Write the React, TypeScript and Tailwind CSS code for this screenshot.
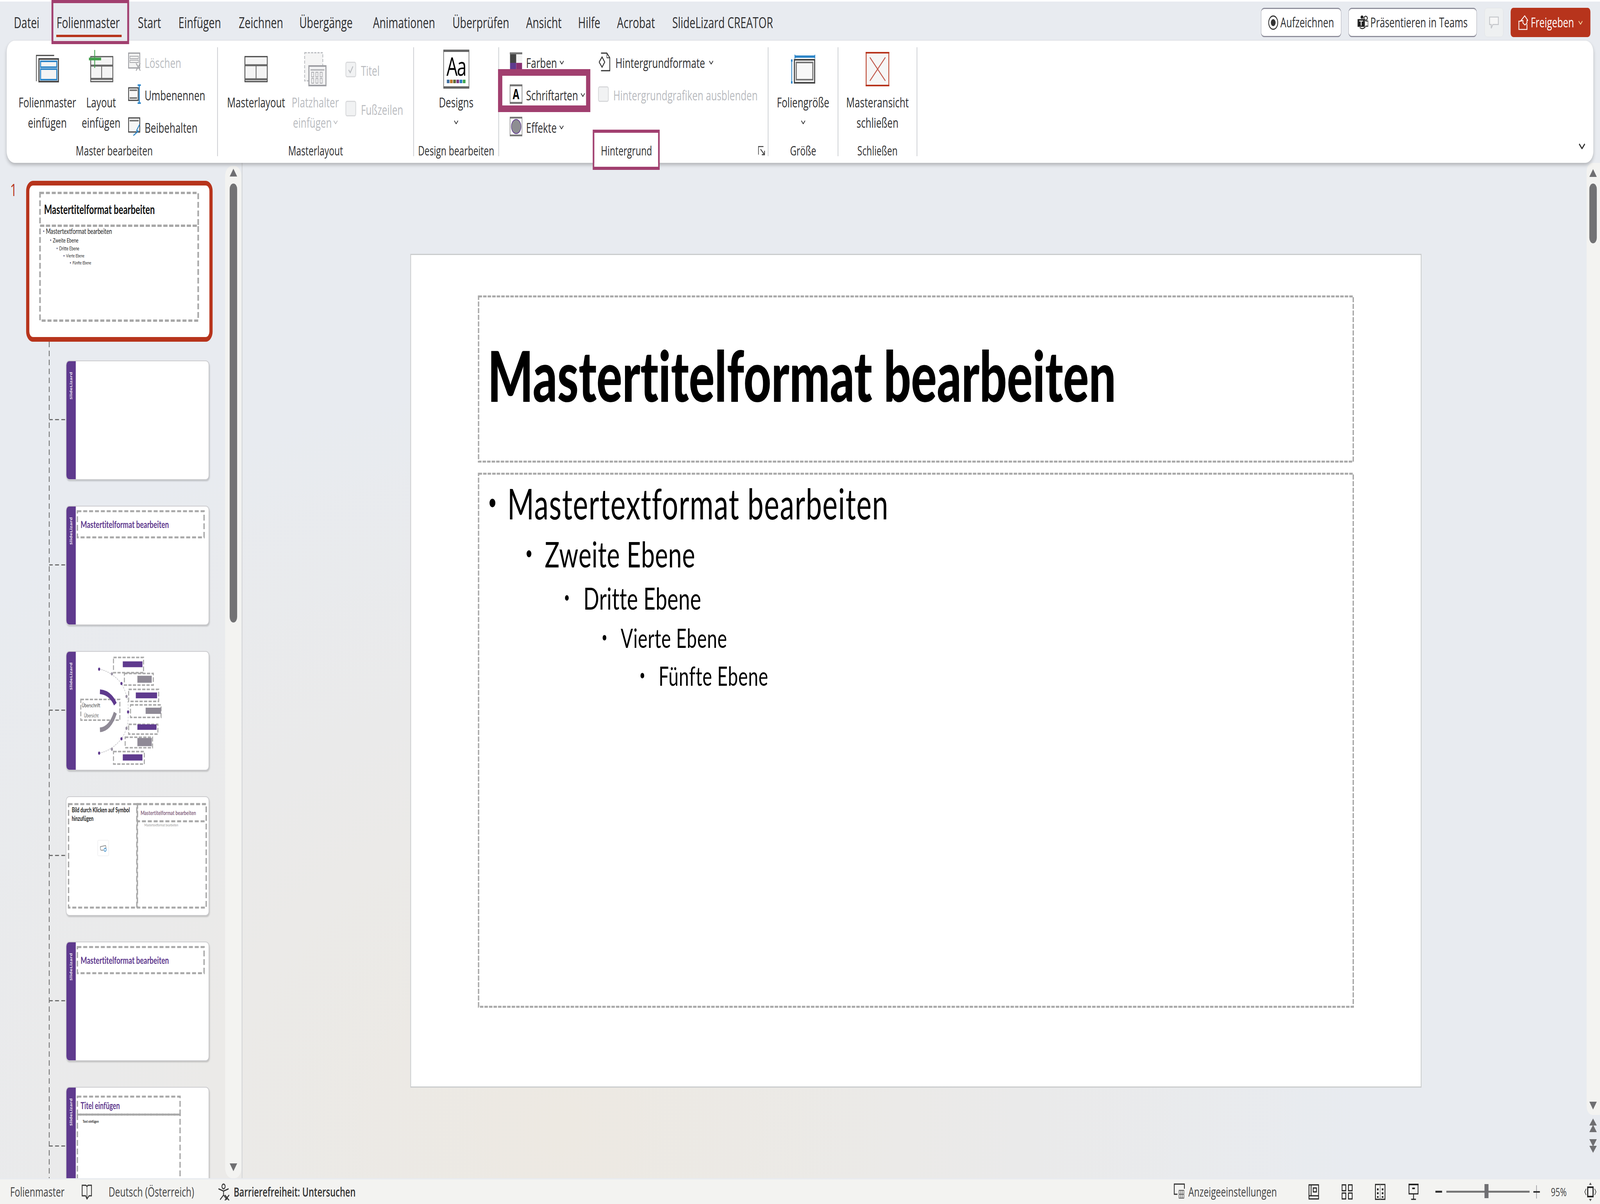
import React from "react";

/*
 * NOTE: the layout below uses the reference's 5998x3083 coordinates, but the sandbox
 * window measured 4096x3083 (window.innerWidth), not the 5998x3083 in the brief.
 * App scales the page to the real window at runtime: 1:1 at 5998 wide, squeezed
 * horizontally to about 68% at 4096 wide, so all content stays inside the frame.
 */

const BLUE = "#2e86c8";
const RED = "#b7341c";
const PURPLE = "#5f3a8e";

function Chev({ className = "" }: { className?: string }) {
  return (
    <svg width="16" height="10" viewBox="0 0 16 10" className={className}>
      <polyline points="1,1 8,9 15,1" fill="none" stroke="currentColor" strokeWidth="2.5" />
    </svg>
  );
}

function Dashed({
  className = "",
  sw = 5,
  dash = "13 4",
  color = "#a8a8a8",
  children,
}: {
  className?: string;
  sw?: number;
  dash?: string;
  color?: string;
  children?: React.ReactNode;
}) {
  return (
    <div className={"relative " + className}>
      <svg className="absolute inset-0 w-full h-full overflow-visible pointer-events-none">
        <rect x="0" y="0" width="100%" height="100%" fill="none" stroke={color} strokeWidth={sw} strokeDasharray={dash} />
      </svg>
      {children}
    </div>
  );
}

/* ---------- ribbon icons ---------- */
const IcoFolienmaster = () => (
  <svg width="86" height="71" viewBox="0 0 86 71">
    <path d="M1 68V2H68" fill="none" stroke="#444" strokeWidth="3" />
    <rect x="11" y="11" width="73" height="58" fill="#f4f4f4" stroke="#444" strokeWidth="4" />
    <rect x="17" y="17" width="61" height="15" fill="none" stroke={BLUE} strokeWidth="4" />
    <rect x="17" y="37" width="61" height="27" fill="none" stroke={BLUE} strokeWidth="4" />
  </svg>
);
const IcoLayout = () => (
  <svg width="92" height="83" viewBox="0 0 92 83">
    <rect x="7" y="17" width="83" height="64" fill="#f4f4f4" stroke="#555" strokeWidth="3" />
    <path d="M7 40H90M7 74H90" stroke="#666" strokeWidth="5" />
    <path d="M48 40V74" stroke="#666" strokeWidth="3" />
    <path d="M22 0V46" stroke="#3f9f4a" strokeWidth="3" />
    <path d="M0 23H46" stroke="#3f9f4a" strokeWidth="7" />
  </svg>
);
const IcoLoeschen = () => (
  <svg width="50" height="48" viewBox="0 0 50 48">
    <rect x="2" y="2" width="42" height="38" fill="#f3f3f3" stroke="#9a9ba0" strokeWidth="3" />
    <rect x="7" y="10" width="32" height="6" fill="none" stroke="#a6a7ab" strokeWidth="2" />
    <rect x="7" y="20" width="32" height="6" fill="none" stroke="#a6a7ab" strokeWidth="2" />
    <path d="M30 28L46 47M46 28L30 47" stroke="#a6a7ab" strokeWidth="3" />
  </svg>
);
const IcoUmbenennen = () => (
  <svg width="50" height="50" viewBox="0 0 50 50">
    <rect x="2" y="9" width="36" height="32" fill="#f6f6f6" stroke="#444" strokeWidth="3" />
    <path d="M6 15H34M6 35H34" stroke="#777" strokeWidth="4" />
    <path d="M36 2H48M36 48H48M42 2V48" stroke={BLUE} strokeWidth="4" />
  </svg>
);
const IcoBeibehalten = () => (
  <svg width="50" height="48" viewBox="0 0 50 48">
    <rect x="2" y="2" width="42" height="36" fill="#f6f6f6" stroke="#444" strokeWidth="3" />
    <path d="M6 9H40" stroke="#777" strokeWidth="4" />
    <path d="M44 18L32 34L38 36L20 47" fill="none" stroke={BLUE} strokeWidth="3" />
  </svg>
);
const IcoMasterlayout = () => (
  <svg width="88" height="68" viewBox="0 0 88 68">
    <rect x="2" y="2" width="84" height="64" fill="#f4f4f4" stroke="#444" strokeWidth="3" />
    <path d="M2 24H86M2 60H86" stroke="#666" strokeWidth="5" />
    <path d="M44 24V60" stroke="#666" strokeWidth="3" />
  </svg>
);
const IcoPlatzhalter = () => (
  <svg width="84" height="88" viewBox="0 0 84 88">
    <rect x="2" y="2" width="68" height="72" fill="#f5f5f5" stroke="#b9bbbf" strokeWidth="3" strokeDasharray="8 4" />
    <rect x="18" y="36" width="64" height="50" fill="#f2f2f3" stroke="#9d9ea3" strokeWidth="4" />
    <path d="M24 46H76" stroke="#a8a9ad" strokeWidth="3" />
    <path d="M28 52h8v12h-8zM44 52h8v12h-8zM60 52h8v12h-8zM28 68h8v12h-8zM44 68h8v12h-8zM60 68h8v12h-8z" fill="none" stroke="#a8a9ad" strokeWidth="2" />
  </svg>
);
const IcoDesigns = () => (
  <div className="w-[97px] h-[100px] bg-white border-x-[2px] border-t-[6px] border-b-[6px] border-x-[#555] border-t-[#666] border-b-[#666] flex flex-col items-center">
    <span className="text-[66px] leading-[66px] mt-[2px] font-['Open_Sans'] tracking-[-3px] text-black">Aa</span>
    <div className="flex gap-[2px] mt-[3px]">
      <span className="w-[10px] h-[9px] bg-[#3f6fa0]" />
      <span className="w-[10px] h-[9px] bg-[#c0762e]" />
      <span className="w-[10px] h-[9px] bg-[#5a6a3a]" />
      <span className="w-[10px] h-[9px] bg-[#7a3a80]" />
      <span className="w-[10px] h-[9px] bg-[#2a7fc0]" />
      <span className="w-[10px] h-[9px] bg-[#3fa34d]" />
    </div>
  </div>
);
const IcoFarben = () => (
  <svg width="47" height="48" viewBox="0 0 47 48">
    <rect x="0" y="0" width="47" height="48" fill="#f4f4f4" />
    <rect x="0" y="0" width="47" height="5" fill="#777" />
    <rect x="1" y="5" width="23" height="22" fill="#444" />
    <rect x="1" y="27" width="23" height="21" fill={PURPLE} />
    <rect x="24" y="27" width="22" height="21" fill="#8a2f70" />
  </svg>
);
const IcoSchrift = () => (
  <div className="w-[47px] h-[50px] bg-white border-x-[2px] border-y-[5px] border-x-[#666] border-y-[#777] flex items-center justify-center">
    <span className="text-[36px] leading-[38px] font-bold text-black font-['Open_Sans']">A</span>
  </div>
);
const IcoEffekte = () => (
  <svg width="47" height="50" viewBox="0 0 47 50">
    <rect x="1" y="1" width="45" height="48" fill="#fff" stroke="#777" strokeWidth="2" />
    <path d="M0 2H47M0 48H47" stroke="#777" strokeWidth="5" />
    <ellipse cx="24" cy="25" rx="18" ry="18" fill="#8e8e92" stroke={PURPLE} strokeWidth="2" />
  </svg>
);
const IcoHgFormate = () => (
  <svg width="43" height="49" viewBox="0 0 43 49">
    <path d="M8 2H30L41 14V47H8" fill="#fff" stroke="#333" strokeWidth="3" />
    <path d="M30 2V14H41" fill="none" stroke="#333" strokeWidth="2" />
    <path d="M1 25L12 12L22 25L12 38Z" fill="#fff" stroke="#333" strokeWidth="3" />
  </svg>
);
const IcoGroesse = () => (
  <svg width="91" height="74" viewBox="0 0 91 74">
    <path d="M14 5H91M15 0V10M90 0V10" stroke={BLUE} strokeWidth="3" />
    <path d="M14 5H91" stroke={BLUE} strokeWidth="6" />
    <path d="M3 14V74" stroke={BLUE} strokeWidth="3" />
    <rect x="0" y="12" width="6" height="6" fill={BLUE} />
    <rect x="0" y="68" width="6" height="6" fill={BLUE} />
    <rect x="13" y="13" width="76" height="59" fill="#f4f4f4" stroke="#444" strokeWidth="4" />
    <rect x="20" y="20" width="62" height="44" fill="#f8f8f8" stroke="#777" strokeWidth="4" />
  </svg>
);
const IcoSchliessen = () => (
  <svg width="89" height="88" viewBox="0 0 89 88">
    <rect x="2" y="2" width="85" height="84" fill="#f6f6f6" stroke={RED} strokeWidth="3" />
    <path d="M0 2H89M0 86H89" stroke={RED} strokeWidth="4" />
    <path d="M16 14L74 74M74 14L16 74" stroke="#c0574a" strokeWidth="3" />
  </svg>
);
const Check = ({ checked }: { checked?: boolean }) => (
  <div className="w-[40px] h-[40px] rounded-[6px] border-[3px] border-[#d9dadc] bg-[#f1f2f3] flex items-center justify-center">
    {checked && (
      <svg width="22" height="22" viewBox="0 0 22 22">
        <path d="M3 12L9 19L19 3" fill="none" stroke="#b9bbbf" strokeWidth="3" />
      </svg>
    )}
  </div>
);

function LargeBtn({
  icon,
  lines,
  w,
  pb,
  chev,
  disabled,
}: {
  icon: React.ReactNode;
  lines: React.ReactNode[];
  w: string;
  pb: string;
  chev?: boolean;
  disabled?: boolean;
}) {
  return (
    <div className={"flex flex-col items-center " + w + (disabled ? " text-[#b9bbbf]" : " text-[#2f2f31]")}>
      <div className={"h-[114px] flex items-end justify-center " + pb}>{icon}</div>
      <div className="text-[35.5px] leading-[52px] text-center whitespace-nowrap">
        {lines.map((l, i) => (
          <div key={i}>{l}</div>
        ))}
      </div>
      {chev && (
        <div className="h-[52px] flex items-center justify-center">
          <Chev />
        </div>
      )}
    </div>
  );
}

function SmallRow({
  icon,
  label,
  chev,
  gap = "gap-[12px]",
  disabled,
  className = "",
}: {
  icon: React.ReactNode;
  label: string;
  chev?: boolean;
  gap?: string;
  disabled?: boolean;
  className?: string;
}) {
  return (
    <div className={"h-[74px] flex items-center whitespace-nowrap text-[35.5px] " + gap + " " + (disabled ? "text-[#b9bbbf] " : "text-[#2f2f31] ") + className}>
      <div className="shrink-0">{icon}</div>
      <span className="pt-[6px]">{label}</span>
      {chev && <Chev className="ml-[-4px] mt-[4px]" />}
    </div>
  );
}

function Group({
  w,
  label,
  children,
  launcher,
  labelClass = "",
}: {
  w: string;
  label: string;
  children: React.ReactNode;
  launcher?: boolean;
  labelClass?: string;
}) {
  return (
    <div className={"relative flex flex-col h-[279px] border-r-[3px] border-[#cfd1d5] shrink-0 " + w}>
      <div className="h-[249px] flex">{children}</div>
      <div className={"h-[30px] flex items-center justify-center text-[33.5px] leading-[30px] text-[#2f2f31] whitespace-nowrap " + labelClass}>{label}</div>
      {launcher && (
        <svg width="28" height="24" viewBox="0 0 28 24" className="absolute right-[8px] bottom-[2px]">
          <path d="M1 22V1H20" fill="none" stroke="#444" strokeWidth="3" />
          <path d="M9 8L24 22M24 12V22H14" fill="none" stroke="#444" strokeWidth="3" />
        </svg>
      )}
    </div>
  );
}

const TABS: [string, string][] = [
  ["Datei", "w-[160px]"],
  ["Folienmaster", "w-[305px]"],
  ["Start", "w-[152px]"],
  ["Einfügen", "w-[226px]"],
  ["Zeichnen", "w-[227px]"],
  ["Übergänge", "w-[276px]"],
  ["Animationen", "w-[298px]"],
  ["Überprüfen", "w-[276px]"],
  ["Ansicht", "w-[195px]"],
  ["Hilfe", "w-[146px]"],
  ["Acrobat", "w-[207px]"],
  ["SlideLizard CREATOR", "w-[380px]"],
];

function TopBar() {
  return (
    <div className="h-[99px] pt-[8px] pl-[52px] pr-[36px] flex items-center shrink-0 text-[39px] text-[#2f2f31]">
      {TABS.map(([t, w]) => (
        <span key={t} className={"whitespace-nowrap " + w}>
          {t}
        </span>
      ))}
      <div className="ml-auto h-[75px] w-[301px] flex items-center justify-center gap-[8px] rounded-[12px] bg-white border-y-[3px] border-x-[1px] border-[#8f8f9c] text-[35px]">
        <svg width="38" height="38" viewBox="0 0 38 38">
          <circle cx="19" cy="19" r="17" fill="none" stroke="#333" strokeWidth="3" />
          <circle cx="19" cy="19" r="9" fill="#333" />
        </svg>
        Aufzeichnen
      </div>
      <div className="ml-[27px] h-[75px] w-[481px] flex items-center justify-center gap-[8px] rounded-[12px] bg-white border-y-[3px] border-x-[1px] border-[#8f8f9c] text-[35px]">
        <svg width="40" height="38" viewBox="0 0 38 46" preserveAspectRatio="none">
          <circle cx="29" cy="9" r="6" fill="none" stroke="#222" strokeWidth="3" />
          <circle cx="16" cy="6" r="5" fill="#222" />
          <rect x="0" y="12" width="26" height="24" fill="#222" />
          <path d="M28 18H38V34H28" fill="none" stroke="#222" strokeWidth="3" />
          <path d="M6 18H20M13 18V32" stroke="#fff" strokeWidth="3" />
          <path d="M8 38Q18 46 28 36" fill="none" stroke="#222" strokeWidth="3" />
        </svg>
        Präsentieren in Teams
      </div>
      <div className="ml-[29px] h-[75px] w-[71px] flex items-center justify-center rounded-[10px] bg-[#eef0f1] border border-[#dfe1e4]">
        <svg width="37" height="32" viewBox="0 0 36 40" preserveAspectRatio="none">
          <path d="M2 2H34V26H14L8 38V26H2Z" fill="#f6f6f6" stroke="#c3c5c9" strokeWidth="3" />
        </svg>
      </div>
      <div className="ml-[27px] h-[75px] w-[299px] flex items-center justify-center gap-[10px] rounded-[10px] bg-[#b7341c] text-white text-[35px]">
        <svg width="36" height="38" viewBox="0 0 38 50" preserveAspectRatio="none">
          <path d="M13 20H2V48H34V30" fill="none" stroke="#fff" strokeWidth="3" />
          <path d="M25 2L10 18H18V26L26 33L34 26V18H38Z" fill="none" stroke="#fff" strokeWidth="3" />
        </svg>
        Freigeben
        <Chev className="text-[#f3d9a0] ml-[6px]" />
      </div>
    </div>
  );
}

function Ribbon() {
  return (
    <div className="relative z-10 h-[314px] mx-[25px] pt-[17px] flex shrink-0 bg-white rounded-[30px] shadow-[0_6px_10px_rgba(0,0,0,0.22)] border-t border-[#dcdde0]">
      <Group w="w-[792px]" label="Master bearbeiten" labelClass="pl-[18px]">
        <div className="pl-[40px] flex">
          <LargeBtn w="w-[225px]" pb="pb-[24px]" icon={<IcoFolienmaster />} lines={["Folienmaster", "einfügen"]} />
          <LargeBtn w="w-[178px]" pb="pb-[24px]" icon={<IcoLayout />} lines={["Layout", "einfügen"]} />
          <div className="ml-[12px] flex flex-col gap-[9px]">
            <SmallRow disabled icon={<IcoLoeschen />} label="Löschen" />
            <SmallRow icon={<IcoUmbenennen />} label="Umbenennen" />
            <SmallRow icon={<IcoBeibehalten />} label="Beibehalten" />
          </div>
        </div>
      </Group>
      <Group w="w-[735px]" label="Masterlayout">
        <div className="pl-[13px] flex">
          <LargeBtn w="w-[260px]" pb="pb-[24px]" icon={<IcoMasterlayout />} lines={["Masterlayout"]} />
          <LargeBtn disabled w="w-[184px]" pb="pb-[14px]" icon={<IcoPlatzhalter />} lines={["Platzhalter", <span key="e" className="inline-flex items-center gap-[6px]">einfügen<Chev /></span>]} />
          <div className="ml-[21px] pt-[20px] flex flex-col gap-[26px]">
            <SmallRow disabled gap="gap-[18px]" icon={<Check checked />} label="Titel" />
            <SmallRow disabled gap="gap-[18px]" icon={<Check />} label="Fußzeilen" />
          </div>
        </div>
      </Group>
      <Group w="w-[319px]" label="Design bearbeiten">
        <LargeBtn w="w-full" pb="pb-[8px]" chev icon={<IcoDesigns />} lines={["Designs"]} />
      </Group>
      <Group w="w-[1010px]" label="Hintergrund" launcher labelClass="pr-[52px]">
        <div className="pl-[40px] flex">
          <div className="w-[331px] flex flex-col gap-[9px]">
            <SmallRow gap="gap-[14px]" chev icon={<IcoFarben />} label="Farben" />
            <SmallRow gap="gap-[14px]" chev icon={<IcoSchrift />} label="Schriftarten" />
            <SmallRow gap="gap-[14px]" chev icon={<IcoEffekte />} label="Effekte" />
          </div>
          <div className="flex flex-col gap-[9px]">
            <SmallRow gap="gap-[19px]" className="pl-[3px]" chev icon={<IcoHgFormate />} label="Hintergrundformate" />
            <SmallRow disabled gap="gap-[17px]" icon={<Check />} label="Hintergrundgrafiken ausblenden" />
          </div>
        </div>
      </Group>
      <Group w="w-[262px]" label="Größe">
        <LargeBtn w="w-full" pb="pb-[21px]" chev icon={<IcoGroesse />} lines={["Foliengröße"]} />
      </Group>
      <Group w="w-[296px]" label="Schließen">
        <LargeBtn w="w-full" pb="pb-[14px]" icon={<IcoSchliessen />} lines={["Masteransicht", "schließen"]} />
      </Group>
      <Chev className="ml-auto self-end mr-[27px] mb-[35px] w-[31px] h-[15px] text-[#333]" />
    </div>
  );
}

function Sidebar() {
  return (
    <div className="w-[35px] h-full bg-[#5f3a8e] shrink-0 flex justify-center pt-[14px] overflow-hidden">
      <span className="[writing-mode:vertical-rl] rotate-180 text-[13px] leading-[14px] h-[84px] text-[#e8e0f0] font-bold whitespace-nowrap overflow-hidden">
        SlideLizard
      </span>
    </div>
  );
}

function Thumb({ children, sidebar = true }: { children?: React.ReactNode; sidebar?: boolean }) {
  return (
    <div className="relative w-[537px] h-[306px] shrink-0">
      <div className="absolute left-[-63px] top-[150px] w-[60px] h-[3px] bg-[repeating-linear-gradient(to_right,#6f6f6f_0,#6f6f6f_14px,transparent_14px,transparent_23px)]" />
      <div className="w-full h-full flex bg-white rounded-[12px] overflow-hidden border-[2px] border-[#cbcbce] shadow-[2px_3px_4px_rgba(0,0,0,0.18)]">
        {sidebar && <Sidebar />}
        {children}
      </div>
    </div>
  );
}

const thumbDash = { sw: 5, dash: "15 7" };

function TitleThumb() {
  return (
    <div className="flex-1 pl-[6px] pr-[17px] pt-[12px]">
      <Dashed {...thumbDash} className="h-[67px] pl-[12px] flex items-center">
        <span className="font-['Lato'] [font-variant-ligatures:none] font-bold text-[25.5px] text-[#5f3a8e] whitespace-nowrap">Mastertitelformat bearbeiten</span>
      </Dashed>
    </div>
  );
}

function DiagramThumb() {
  const bar = PURPLE;
  const hatch = "#8f8a96";
  return (
    <svg width="500" height="302" viewBox="35 2 500 302" className="block">
      <g fill="none" stroke="#aaa" strokeWidth="4" strokeDasharray="12 5">
        <rect x="177" y="16" width="113" height="39" />
        <rect x="218" y="57" width="109" height="30" />
        <rect x="234" y="98" width="113" height="31" />
        <rect x="241" y="138" width="115" height="32" />
        <rect x="234" y="188" width="110" height="25" />
        <rect x="221" y="221" width="103" height="27" />
        <rect x="177" y="258" width="116" height="32" />
        <rect x="54" y="124" width="147" height="53" />
      </g>
      <path d="M123 46Q170 52 207 83Q236 118 232 156Q236 196 207 225Q170 256 123 262" fill="none" stroke="#c5c5c8" strokeWidth="2" strokeDasharray="5 3" />
      {[[123, 46], [171, 58], [207, 83], [226, 116], [232, 156], [226, 198], [207, 225], [171, 252], [123, 262]].map(([x, y], i) => (
        <circle key={i} cx={x} cy={y} r="4" fill={i % 2 ? "#9b93a5" : bar} />
      ))}
      <path d="M126 104Q164 106 184 136" fill="none" stroke={bar} strokeWidth="12" />
      <path d="M126 202Q164 200 184 158" fill="none" stroke={hatch} strokeWidth="12" />
      <rect x="212" y="26" width="74" height="15" fill={bar} />
      <rect x="261" y="106" width="80" height="15" fill={bar} />
      <rect x="267" y="188" width="72" height="14" fill={bar} />
      <rect x="212" y="265" width="74" height="16" fill={bar} />
      <rect x="267" y="63" width="54" height="18" fill={hatch} />
      <rect x="298" y="145" width="58" height="16" fill={hatch} />
      <rect x="267" y="223" width="54" height="21" fill={hatch} />
      <text x="58" y="144" fontSize="14" fontFamily="Lato" fill="#444">Überschrift</text>
      <text x="66" y="170" fontSize="13" fontFamily="Lato" fill="#666">Übersicht</text>
    </svg>
  );
}

function ImageThumb() {
  return (
    <div className="flex w-full pl-[8px] pr-[9px] pt-[18px] pb-[19px]">
      <Dashed {...thumbDash} className="w-[256px] pl-[12px] pt-[4px] flex flex-col">
        <div className="font-['Lato'] text-[16.5px] leading-[22px] font-bold text-[#222] whitespace-nowrap">Bild durch Klicken auf Symbol<br />hinzufügen</div>
        <div className="mt-[44px] ml-[97px] w-[42px] h-[41px] rounded-[3px] border border-[#e4e4e6] flex items-center justify-center">
          <svg width="26" height="18" viewBox="0 0 26 18">
            <path d="M3 14L2 5L22 2L24 10" fill="none" stroke="#8c8c8c" strokeWidth="2" />
            <circle cx="20" cy="13" r="4" fill="none" stroke={BLUE} strokeWidth="2" />
            <path d="M4 14H14" stroke="#8c8c8c" strokeWidth="2" />
          </svg>
        </div>
      </Dashed>
      <Dashed {...thumbDash} className="flex-1 ml-[2px] flex flex-col">
        <Dashed {...thumbDash} className="h-[44px] pl-[12px] flex items-center">
          <span className="font-['Lato'] [font-variant-ligatures:none] font-bold text-[16px] text-[#8a6a85] whitespace-nowrap">Mastertitelformat bearbeiten</span>
        </Dashed>
        <span className="pl-[26px] pt-[2px] font-['Lato'] text-[10px] text-[#9a9a9a] whitespace-nowrap">Mastertextformat bearbeiten</span>
      </Dashed>
    </div>
  );
}

function TextThumb() {
  return (
    <div className="flex-1 pl-[6px] pt-[23px] w-[385px]">
      <div className="w-[385px] flex flex-col">
        <Dashed {...thumbDash} className="h-[46px] pl-[12px] flex items-center">
          <span className="font-['Lato'] font-bold text-[24px] text-[#5f3a8e] whitespace-nowrap">Titel einfügen</span>
        </Dashed>
        <Dashed {...thumbDash} className="h-[260px] pl-[20px] pt-[3px]">
          <span className="font-['Lato'] text-[10px] font-bold text-[#222] whitespace-nowrap">Text einfügen</span>
        </Dashed>
      </div>
    </div>
  );
}

function MiniBullet({ pl, size, text, h }: { pl: string; size: string; text: string; h: string }) {
  return (
    <div className={"flex items-center gap-[6px] whitespace-nowrap font-['Lato'] text-[#222] " + pl + " " + size + " " + h}>
      <span className="w-[4px] h-[4px] rounded-full bg-[#5a5a7a] shrink-0" />
      {text}
    </div>
  );
}

function ThumbPanel() {
  return (
    <div className="relative w-[844px] h-full shrink-0 overflow-hidden pt-[46px]">
      <div className="absolute left-[183px] top-[458px] bottom-0 w-[3px] bg-[repeating-linear-gradient(to_bottom,#6f6f6f_0,#6f6f6f_14px,transparent_14px,transparent_23px)]" />
      <div className="flex">
        <span className="w-[98px] pl-[38px] text-[44px] leading-[44px] text-[#b7341c] shrink-0">1</span>
        <div className="w-[699px] h-[412px] rounded-[26px] border-[12px] border-[#b7341c] bg-white pl-[40px] pr-[42px] pt-[19px]">
          <Dashed sw={6} dash="15 7" className="h-[84px] pl-[15px] flex items-center">
            <span className="font-['Lato'] [font-variant-ligatures:none] font-bold text-[32px] text-[#111] whitespace-nowrap">Mastertitelformat bearbeiten</span>
          </Dashed>
          <Dashed sw={6} dash="15 7" className="h-[243px] pt-[2px] pl-[12px] flex flex-col">
            <MiniBullet pl="pl-0" size="text-[19.5px]" h="h-[24px]" text="Mastertextformat bearbeiten" />
            <MiniBullet pl="pl-[26px]" size="text-[16px]" h="h-[22px]" text="Zweite Ebene" />
            <MiniBullet pl="pl-[50px]" size="text-[13.5px]" h="h-[20px]" text="Dritte Ebene" />
            <MiniBullet pl="pl-[76px]" size="text-[12px]" h="h-[18px]" text="Vierte Ebene" />
            <MiniBullet pl="pl-[100px]" size="text-[12px]" h="h-[18px]" text="Fünfte Ebene" />
          </Dashed>
        </div>
      </div>
      <div className="pl-[247px] mt-[48px] flex flex-col gap-[66px]">
        <Thumb />
        <Thumb><TitleThumb /></Thumb>
        <Thumb><DiagramThumb /></Thumb>
        <Thumb sidebar={false}><ImageThumb /></Thumb>
        <Thumb><TitleThumb /></Thumb>
        <Thumb><TextThumb /></Thumb>
      </div>
    </div>
  );
}

const TriUp = ({ c = "#6f6f72", w = 28, h = 20 }: { c?: string; w?: number; h?: number }) => (
  <svg width={w} height={h} viewBox="0 0 28 20" className="block">
    <path d="M14 0L28 20H0Z" fill={c} />
  </svg>
);
const TriDown = ({ c = "#6f6f72", w = 28, h = 20 }: { c?: string; w?: number; h?: number }) => (
  <svg width={w} height={h} viewBox="0 0 28 20" className="block">
    <path d="M14 20L28 0H0Z" fill={c} />
  </svg>
);

function LeftScroll() {
  return (
    <div className="mt-[8px] w-[61px] h-[2592px] shrink-0 bg-[#f3f3f1] rounded-[26px] flex flex-col items-center pt-[7px] pb-[18px]">
      <TriUp />
      <div className="mt-[18px] w-[28px] h-[1124px] rounded-full bg-[#727274]" />
      <div className="mt-auto">
        <TriDown />
      </div>
    </div>
  );
}

function Bullet({ lv, box, fs, lh, children }: { lv: string; box: string; fs: string; lh: string; children: React.ReactNode }) {
  return (
    <div className={"flex items-center whitespace-nowrap text-black font-['Lato'] [font-variant-ligatures:none] " + lv + " " + fs + " " + lh}>
      <span className={"shrink-0 rounded-full bg-black " + box} />
      {children}
    </div>
  );
}

function Slide() {
  return (
    <div className="ml-[629px] mt-[233px] w-[3791px] h-[2135px] shrink-0 bg-white border-[3px] border-[#cacccd] pl-[253px] pt-[106px]">
      <Dashed className="w-[3279px] h-[423px] pl-[34px] pb-[24px] flex items-center">
        <span className="font-['Lato'] [font-variant-ligatures:none] font-black text-[180px] leading-[200px] text-black whitespace-nowrap">Mastertitelformat bearbeiten</span>
      </Dashed>
      <Dashed className="w-[3279px] h-[1365px] mt-[31px] pt-[13px] flex flex-col">
        <Bullet lv="pl-[41px] gap-[45px] tracking-[2px]" box="w-[22px] h-[22px]" fs="text-[108px]" lh="leading-[124px]">Mastertextformat bearbeiten</Bullet>
        <Bullet lv="pl-[180px] gap-[50px] tracking-[1px]" box="w-[18px] h-[18px]" fs="text-[92px]" lh="leading-[135px]">Zweite Ebene</Bullet>
        <Bullet lv="pl-[324px] gap-[55px] tracking-[0.4px]" box="w-[14px] h-[14px]" fs="text-[78px]" lh="leading-[92px]">Dritte Ebene</Bullet>
        <Bullet lv="pl-[465px] gap-[54px] tracking-[1px]" box="w-[14px] h-[14px]" fs="text-[68px]" lh="leading-[112px]">Vierte Ebene</Bullet>
        <Bullet lv="pl-[607px] gap-[54px] tracking-[1px]" box="w-[14px] h-[14px]" fs="text-[68px]" lh="leading-[82px]">Fünfte Ebene</Bullet>
      </Dashed>
    </div>
  );
}

function RightScroll() {
  return (
    <div className="w-[50px] shrink-0 h-full flex flex-col">
      <div className="h-[2438px] bg-[#f3f3f1] rounded-l-[22px] flex flex-col items-center pt-[15px] pb-[13px] pr-[2px]">
        <TriUp h={22} />
        <div className="mt-[16px] w-[28px] h-[153px] rounded-full bg-[#727274]" />
        <div className="mt-auto">
          <TriDown h={22} />
        </div>
      </div>
      <div className="pt-[9px] flex flex-col items-center gap-[18px] pr-[2px]">
        <svg width="28" height="35" viewBox="0 0 28 35"><path d="M14 0L28 18H0ZM14 16L28 35H0Z" fill="#6f6f72" /></svg>
        <svg width="28" height="35" viewBox="0 0 28 35"><path d="M14 35L28 17H0ZM14 19L28 0H0Z" fill="#6f6f72" /></svg>
      </div>
    </div>
  );
}

function StatusBar() {
  return (
    <div className="h-[63px] mt-[3px] bg-[#f3f3f1] flex items-center pl-[38px] pr-[13px] text-[33.5px] text-[#444] shrink-0 whitespace-nowrap">
      <span className="w-[206px]">Folienmaster</span>
      <svg width="39" height="40" viewBox="0 0 39 40" className="ml-[62px]">
        <path d="M2 3H16L20 6L24 3H37V30H28L20 38L15 30H2Z" fill="none" stroke="#333" strokeWidth="3" />
        <path d="M20 6V36" stroke="#333" strokeWidth="2" />
      </svg>
      <span className="ml-[62px] w-[320px]">Deutsch (Österreich)</span>
      <svg width="46" height="44" viewBox="0 0 46 44" className="ml-[88px]">
        <circle cx="23" cy="8" r="6" fill="none" stroke="#333" strokeWidth="3" />
        <path d="M4 14L23 20L42 14M23 20V30L10 42M23 30L36 42" fill="none" stroke="#333" strokeWidth="3" />
        <path d="M28 30L44 44M44 30L28 44" stroke="#333" strokeWidth="3" />
      </svg>
      <span className="ml-[15px] font-semibold text-[#333] text-[32px] w-[461px]">Barrierefreiheit: Untersuchen</span>
      <div className="ml-auto flex items-center">
        <svg width="43" height="44" viewBox="0 0 43 44">
          <path d="M14 28H2V2H40V14" fill="none" stroke="#333" strokeWidth="3" />
          <path d="M20 18H38V38H20Z M26 18V38M32 18V38M20 28H38" fill="none" stroke="#555" strokeWidth="2" />
        </svg>
        <span className="ml-[12px] w-[347px]">Anzeigeeinstellungen</span>
        <svg width="40" height="40" viewBox="0 0 40 40" className="ml-[103px]">
          <rect x="2" y="2" width="36" height="36" fill="none" stroke="#222" strokeWidth="3" />
          <path d="M10 2V30M2 30H38" stroke="#222" strokeWidth="3" />
          <rect x="18" y="10" width="12" height="10" fill="none" stroke="#222" strokeWidth="3" />
        </svg>
        <svg width="42" height="40" viewBox="0 0 42 40" className="ml-[84px]">
          <path d="M2 2h14v15H2zM26 2h14v15H26zM2 23h14v15H2zM26 23h14v15H26z" fill="none" stroke="#222" strokeWidth="3" />
        </svg>
        <svg width="40" height="42" viewBox="0 0 40 42" className="ml-[83px]">
          <rect x="2" y="2" width="36" height="38" fill="none" stroke="#222" strokeWidth="3" />
          <path d="M20 0V42" stroke="#777" strokeWidth="2" />
          <path d="M8 12h6v5H8zM26 12h6v5h-6zM8 22h6v5H8zM26 22h6v5h-6zM8 32h6v4H8zM26 32h6v4h-6z" fill="#222" />
        </svg>
        <svg width="38" height="42" viewBox="0 0 38 42" className="ml-[86px]">
          <rect x="2" y="2" width="34" height="24" fill="none" stroke="#222" strokeWidth="3" />
          <path d="M0 2H38" stroke="#222" strokeWidth="4" />
          <path d="M14 12H24" stroke="#222" strokeWidth="4" />
          <path d="M19 26V40M10 40H28" stroke="#222" strokeWidth="3" />
        </svg>
        <span className="ml-[63px] w-[25px] h-[5px] bg-[#333]" />
        <div className="relative ml-[16px] w-[312px] h-[5px] bg-[#777]">
          <span className="absolute left-[143px] top-[-17px] w-[15px] h-[36px] bg-[#6f6f72]" />
        </div>
        <svg width="25" height="34" viewBox="0 0 25 34" className="ml-[14px]">
          <path d="M12 0V34" stroke="#8a8a8e" strokeWidth="2" />
          <path d="M0 17H25" stroke="#333" strokeWidth="4" />
        </svg>
        <span className="ml-[41px] w-[68px] text-[30px]">95%</span>
        <svg width="46" height="48" viewBox="0 0 46 48" className="ml-[57px]">
          <path d="M23 0L18 6H28ZM23 48L18 42H28Z" fill="#555" />
          <path d="M7 16L2 24L7 32M39 16L44 24L39 32" fill="none" stroke="#333" strokeWidth="2" />
          <rect x="13" y="12" width="20" height="24" fill="none" stroke="#222" strokeWidth="4" />
        </svg>
      </div>
    </div>
  );
}

export default function App() {
  const sx = window.innerWidth / 5998;
  const sy = window.innerHeight / 3083;
  return (
    <div className="w-screen h-screen overflow-hidden bg-[#e8ebf0]">
      <div
        className="relative w-[5998px] h-[3083px] origin-top-left flex flex-col bg-[#e8ebf0] font-['Open_Sans',sans-serif]"
        style={{ transform: `scale(${sx}, ${sy})` }}
      >
        <div className="h-[4px] bg-white shrink-0" />
        <TopBar />
        <Ribbon />
        <div className="flex-1 min-h-0 flex bg-[radial-gradient(ellipse_at_35%_95%,#ede9e2_0%,#e8ebf0_55%)]">
          <ThumbPanel />
          <LeftScroll />
          <div className="w-[3px] ml-[1px] bg-[#d3d5d8] shrink-0" />
          <div className="flex-1 min-w-0">
            <Slide />
          </div>
          <RightScroll />
        </div>
        <StatusBar />

        {/* annotation frames drawn over the screenshot */}
        <div className="absolute z-20 left-[193px] top-0 w-[291px] h-[113px] border-x-[7px] border-y-[8px] border-[#a13f6f]">
          <div className="absolute left-[11px] top-[81px] w-[245px] h-[6px] bg-[#b7341c]" />
        </div>
        <div className="absolute z-20 left-[1867px] top-[177px] w-[346px] h-[110px] border-x-[16px] border-y-[17px] border-[#a13f6f]" />
        <div className="absolute z-20 left-[2222px] top-[332px] w-[251px] h-[103px] border-x-[6px] border-t-[8px] border-b-[8px] border-[#a13f6f]">
          <div className="absolute left-0 right-0 bottom-0 h-[10px] bg-white" />
        </div>
      </div>
    </div>
  );
}
